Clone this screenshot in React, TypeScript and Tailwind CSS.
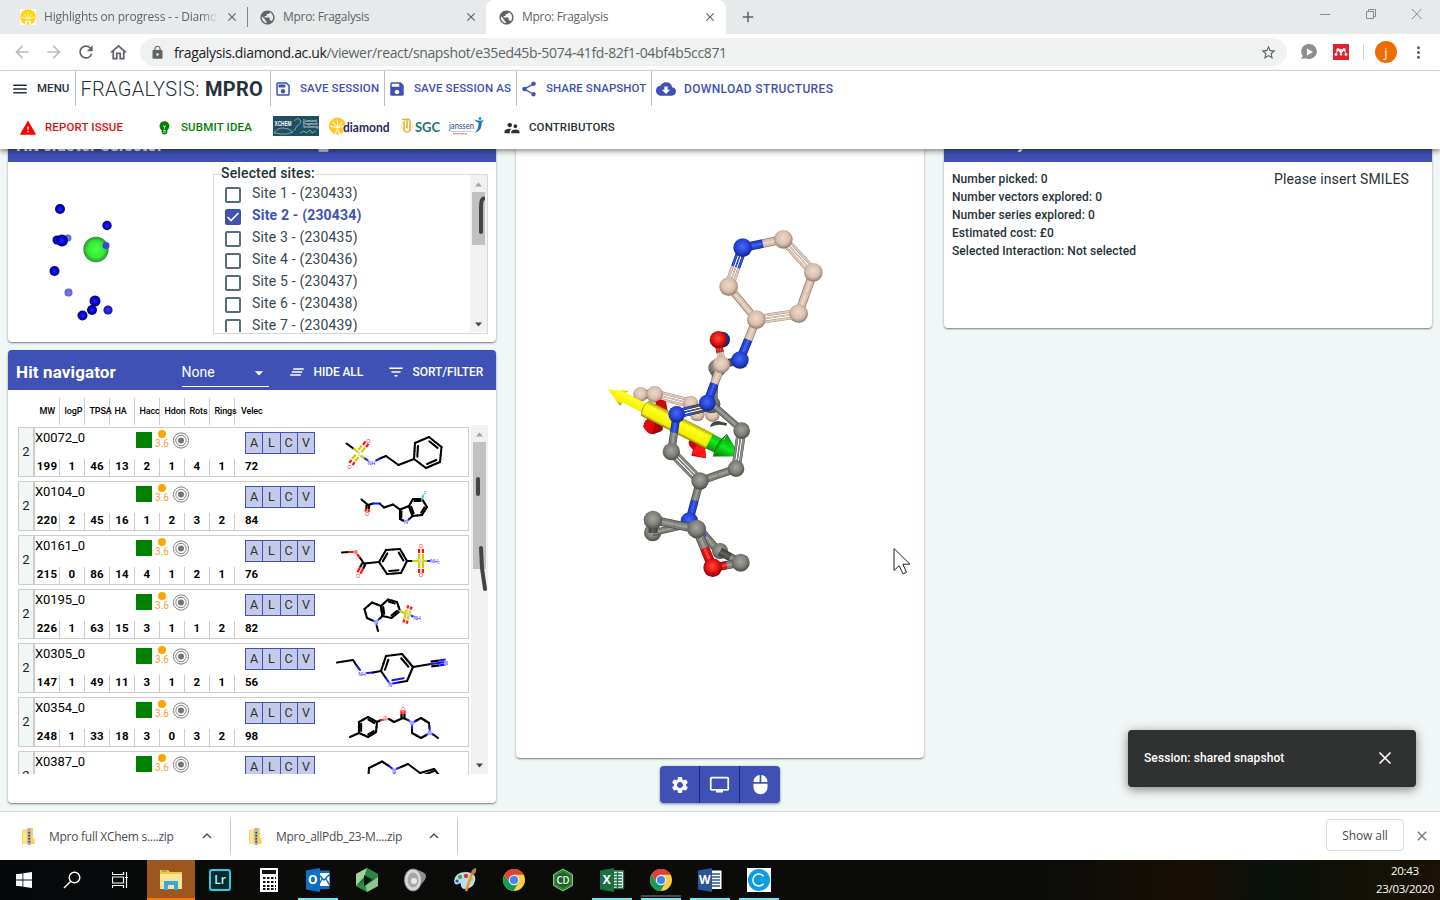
import React from "react";
import {
  MdMenu, MdOutlineSave, MdSave, MdShare, MdCloudDownload, MdWarning, MdEmojiObjects,
  MdSupervisorAccount, MdClearAll, MdFilterList, MdSettings, MdPersonalVideo, MdMouse,
  MdArrowDropDown, MdClose, MdStarBorder, MdRefresh, MdOutlineHome, MdLock, MdPublic,
  MdArrowBack, MdArrowForward, MdAdd, MdMoreVert, MdKeyboardArrowUp, MdLock as MdLockHeader,
} from "react-icons/md";

type P = [number, number];

/* ---------- browser chrome ---------- */

function Sun({ className }: { className?: string }) {
  return (
    <svg viewBox="0 0 18 18" className={className}>
      <circle cx="9" cy="9" r="8.800" fill="#fbd30f" />
      <g stroke="#fffbe0" strokeWidth="1">
        {[-75, -38, 0, 38, 75].map((a) => (
          <line key={a} x1="9" y1="11" x2="9" y2="4" transform={`rotate(${a} 9 11)`} />
        ))}
      </g>
      <path d="M5 17l1.500-4h5l1.500 4z" fill="#fffbe0" />
      <path d="M8 17v-3h2v3z" fill="#fbd30f" />
    </svg>
  );
}

function TabBar() {
  return (
    <div className="flex h-[34px] shrink-0 items-stretch bg-[#e6eaea] font-['Open_Sans','Noto_Sans',sans-serif] text-[12px] text-[#5f6368]">
      <div className="flex w-[247px] items-center pl-[20px]">
        <span className="mr-[8px] flex size-4 bg-white"><Sun className="size-4" /></span>
        <span className="w-[174px] overflow-hidden whitespace-nowrap [mask-image:linear-gradient(to_right,black_90%,transparent)] tracking-[-0.2px]">Highlights on progress - - Diamond</span>
        <MdClose className="ml-[7px] size-[14px]" />
      </div>
      <div className="my-[7px] w-px bg-[#80868b]" />
      <div className="flex w-[238px] items-center pl-[11px]">
        <MdPublic className="size-[17px]" />
        <span className="ml-[7px] w-[181px] tracking-[-0.3px]">Mpro: Fragalysis</span>
        <MdClose className="size-[14px]" />
      </div>
      <div className="flex w-[240px] items-center rounded-t-[8px] bg-white pl-[12px]">
        <MdPublic className="size-[17px]" />
        <span className="ml-[7px] w-[181px] tracking-[-0.3px]">Mpro: Fragalysis</span>
        <MdClose className="size-[14px]" />
      </div>
      <div className="flex items-center pl-[13px]"><MdAdd className="size-[18px]" /></div>
      <div className="flex-1" />
      <svg className="mr-[17px] mt-[7px] h-[14px] w-[104px]" viewBox="0 0 104 14" fill="none" stroke="#858989">
        <path d="M1 7.500h10M47.500 4.500h7v7h-7zM49.500 4.500v-2h7v7h-2M93 2l9.500 10M102.500 2 93 12" />
      </svg>
    </div>
  );
}

function AddressBar() {
  return (
    <div className="flex h-[37px] shrink-0 items-center border-b border-[#dadcdc] bg-white font-['Open_Sans','Noto_Sans',sans-serif] text-[#5f6368]">
      <MdArrowBack className="ml-[12px] size-[20px] text-[#babcbe]" />
      <MdArrowForward className="ml-[12px] size-[20px] text-[#babcbe]" />
      <MdRefresh className="ml-[12px] size-[20px]" />
      <MdOutlineHome className="ml-[12px] size-[21px]" />
      <div className="ml-[11px] flex h-[28px] w-[1147px] items-center rounded-full bg-[#f0f2f1] pl-[10px]">
        <MdLock className="size-[15px]" />
        <span className="ml-[9px] whitespace-nowrap text-[14px] tracking-[-0.35px]"><span className="text-[#202124]">fragalysis.diamond.ac.uk</span>/viewer/react/snapshot/e35ed45b-5074-41fd-82f1-04bf4b5cc871</span>
        <MdStarBorder className="ml-auto mr-[10px] size-[17px]" />
      </div>
      <svg className="ml-[14px] size-[16px]" viewBox="0 0 16 16"><path d="M8.500 0A7.500 7.500 0 1 1 5 14.200L0 15l1.800-3A7.500 7.500 0 0 1 8.500 0z" fill="#8e8e8e" /><path d="M6 4.500v7l6-3.500z" fill="#fff" /></svg>
      <svg className="ml-[16px] size-[16px]" viewBox="0 0 16 16"><path fill="#e5202e" d="M0 0h16v16H0z" /><g fill="#fff"><circle cx="8" cy="7" r="2" /><circle cx="5" cy="5.500" r="1.600" /><circle cx="11" cy="5.500" r="1.600" /><circle cx="3" cy="10.500" r="1.400" /><circle cx="8" cy="10.300" r="1.200" /><circle cx="13" cy="10.500" r="1.400" /><path d="M3 10 4 5h2l2 3 2-3h2l1 5-2-3-1 0-2 3-2-3H5z" /></g></svg>
      <span className="ml-[14px] h-[16px] w-px bg-[#cfd1d2]" />
      <span className="ml-[11px] flex size-[22px] items-center justify-center rounded-full bg-[#ef6c00] text-[13px] leading-none text-white">j</span>
      <MdMoreVert className="ml-[12px] size-[19px]" />
    </div>
  );
}

/* ---------- application header ---------- */

function Logos() {
  return (
    <svg className="h-[30px] w-[215px]" viewBox="272 112 215 30">
      <rect x="273" y="115" width="46" height="20" fill="#1f4f63" />
      <text x="274.500" y="124.500" fontSize="7" fontWeight="700" fill="#fff" textLength="17" lengthAdjust="spacingAndGlyphs" fontFamily="Liberation Sans">XCHEM</text>
      <path d="M274 132q3-5 9-5t10 4q-7 3-12 2t-7-1M294 120q4-4 6-1t-3 6l-3 5M300 132l4-2 2 2 4-3 2 3 4-2" fill="none" stroke="#9fb8c2" strokeWidth=".8" />
      <g fontSize="3.400" fill="#e2ebee" fontFamily="Liberation Sans"><text x="303" y="120.500">Diamond</text><text x="303" y="123.700">Fragment</text><text x="303" y="127">Screening</text></g>
      <circle cx="337.500" cy="125" r="8.600" fill="#fcc92b" />
      <g stroke="#fffbe6" strokeWidth="1.100">
        {[-75, -38, 0, 38, 75].map((a) => (
          <line key={a} x1="337.500" y1="127" x2="337.500" y2="119.500" transform={`rotate(${a} 337.500 127)`} />
        ))}
      </g>
      <path d="M337.500 127l-3.500 6.500h7z" fill="#fff4c8" />
      <path d="M337.500 129l-1.500 4.500h3z" fill="#fcc92b" />
      <text x="343" y="131" fontSize="13" fontWeight="700" fill="#1f2a5c" stroke="#fff" strokeWidth="1" paintOrder="stroke" textLength="46.500" lengthAdjust="spacingAndGlyphs" fontFamily="Lato">diamond</text>
      <path d="M402 118.500h5v9M404 120v8q0 3 3 3t3-3v-7q0-3-3-3" fill="none" stroke="#e2b33c" strokeWidth="1.700" />
      <circle cx="407" cy="125" r="5.800" fill="none" stroke="#f0d590" strokeWidth=".7" />
      <text x="415" y="131" fontSize="13" fontWeight="700" fill="#1d7373" textLength="25" fontFamily="Lato">SGC</text>
      <text x="449" y="128" fontSize="9" fontWeight="400" fill="#2c4a85" textLength="25" lengthAdjust="spacingAndGlyphs" fontFamily="Lato">janssen</text>
      <path d="M451 130.500h20" stroke="#9ba4b5" strokeWidth=".6" />
      <path d="M453 132.800h14" stroke="#e26468" strokeWidth=".9" />
      <path d="M474 118.500q5 2 10 .5l-2.500 3q1 7-6.500 10 4-5 3.500-10.500-2-.5-4.500-3z" fill="#1776b5" />
      <circle cx="480" cy="117.500" r="1.300" fill="#1776b5" />
    </svg>
  );
}

function AppHeader() {
  return (
    <header className="relative z-10 flex h-[78px] shrink-0 flex-col bg-white font-[Roboto,sans-serif] text-[11.5px] font-medium text-[#263238] shadow-[0_2px_4px_rgba(0,0,0,.3),0_4px_6px_rgba(0,0,0,.14)]">
      <div className="flex h-[35px] items-center [&>div]:flex [&>div]:h-full [&>div]:items-center [&>div]:whitespace-nowrap [&>div]:border-r [&>div]:border-[#bdbdbd]">
        <div className="w-[76px] pl-[11px]"><MdMenu className="mr-[8px] size-[18px]" /><span className="tracking-[0.05px]">MENU</span></div>
        <div className="w-[195px] pl-[4.5px] text-[20px] font-light tracking-[0.31px]">FRAGALYSIS:&nbsp;<b className="font-bold">MPRO</b></div>
        <div className="w-[114px] pl-[3px] text-[#3f51b5]"><MdOutlineSave className="mr-[8px] size-[18px]" /><span className="tracking-[0.13px]">SAVE SESSION</span></div>
        <div className="w-[132px] pl-[3px] text-[#3f51b5]"><MdSave className="mr-[8px] size-[18px]" /><span className="tracking-[0.13px]">SAVE SESSION AS</span></div>
        <div className="w-[135px] pl-[3px] text-[#3f51b5]"><MdShare className="mr-[8px] size-[18px]" /><span className="tracking-[0.07px]">SHARE SNAPSHOT</span></div>
        <div className="!border-0 pl-[4px] text-[12px] text-[#3f51b5]"><MdCloudDownload className="mr-[8px] size-[20px]" /><span className="tracking-[0.35px]">DOWNLOAD STRUCTURES</span></div>
      </div>
      <div className="flex h-[43px] items-center whitespace-nowrap">
        <div className="flex w-[156px] items-center pl-[19px] text-[#f00]"><MdWarning className="mr-[8px] size-[18px]" /><span className="tracking-[0.12px] text-[#e01010]">REPORT ISSUE</span></div>
        <div className="flex w-[116px] items-center text-[#008000]"><MdEmojiObjects className="mr-[8px] size-[17px]" /><span className="tracking-[0.15px]">SUBMIT IDEA</span></div>
        <Logos />
        <div className="ml-[16px] flex items-center"><MdSupervisorAccount className="mr-[8px] size-[18px]" /><span className="tracking-[0.1px]">CONTRIBUTORS</span></div>
      </div>
    </header>
  );
}

/* ---------- site selector ---------- */

const clusterBalls: [number, number, number, number][] = [
  [60, 209, 5, 1], [107, 225.500, 4.700, 1], [68, 238, 3.500, 0.6], [57, 240, 4.500, 1], [62, 240.500, 6, 1],
  [54.500, 271, 5, 1], [68.500, 292.500, 4, 0.6], [92, 310, 5, 1], [95, 301, 5.500, 1], [82.500, 315.500, 5, 1], [108, 310, 4.600, 0.9],
];

function ClusterPlot() {
  return (
    <svg className="h-[171px] w-[200px] shrink-0" viewBox="8 162 200 171">
      <defs>
        <radialGradient id="blueBall"><stop offset="0" stopColor="#2a2aff" /><stop offset=".5" stopColor="#0808dd" /><stop offset="1" stopColor="#02027d" /></radialGradient>
        <radialGradient id="greenBall"><stop offset="0" stopColor="#48ff48" /><stop offset=".65" stopColor="#35ea35" /><stop offset="1" stopColor="#329038" /></radialGradient>
      </defs>
      {clusterBalls.map(([x, y, r, o], i) => <circle key={i} cx={x} cy={y} r={r} opacity={o} fill="url(#blueBall)" />)}
      <circle cx="96" cy="249.500" r="12.700" fill="url(#greenBall)" />
      <circle cx="106" cy="245.500" r="3.500" fill="#4040dc" />
    </svg>
  );
}

function ScrollArrow({ up = false, dark = false }) {
  return <svg className="size-[7px]" viewBox="0 0 7 7"><path d={up ? "M0 5.500 3.500 1.500 7 5.500z" : "M0 1.500 3.500 5.500 7 1.500z"} fill={dark ? "#444" : "#a3a3a3"} /></svg>;
}

function ClusterSelector() {
  const sites = [1, 2, 3, 4, 5, 6, 7];
  return (
    <section className="-mt-[27px] flex h-[220px] shrink-0 flex-col overflow-hidden rounded-[4px] bg-white shadow-[0_1px_2px_rgba(0,0,0,.5)]">
      <div className="flex h-[40px] shrink-0 items-center bg-[#3f51b5] pl-[8px] pt-[7px] text-[17px] font-bold text-white">
        <span className="w-[300px] tracking-[0.1px]">Hit cluster selector</span><MdLockHeader className="size-[15px] text-[#d8dcf0]" />
      </div>
      <div className="flex flex-1">
        <ClusterPlot />
        <fieldset className="ml-[5px] mt-[4px] h-[168px] w-[275px] border border-[#d8d8d8]">
          <legend className="ml-[7px] h-[17px] whitespace-nowrap text-[14px] font-medium leading-[15px] tracking-[0.15px] text-[#263238]">Selected sites:</legend>
          <div className="-mt-[8px] flex h-[157px] overflow-hidden">
            <div className="flex-1 pl-[11px] pt-[8px]">
              {sites.map((n) => (
                <div key={n} className={"flex h-[22px] items-center text-[14px] tracking-[0.17px] " + (n === 2 ? "font-bold text-[#3f51b5]" : "text-[#37474f]")}>
                  <span className={"mr-[11px] mt-[2px] flex size-[16px] items-center justify-center rounded-[2px] border-2 " + (n === 2 ? "border-[#3f51b5] bg-[#3f51b5]" : "border-[#546e7a] bg-white")}>
                    {n === 2 && <svg className="size-[14px] shrink-0" viewBox="0 0 14 14"><path d="M1.500 7 5 10.500 12.500 3" fill="none" stroke="#fff" strokeWidth="1.700" /></svg>}
                  </span>
                  <span className="-mt-px">Site {n} - ({230432 + n})</span>
                </div>
              ))}
            </div>
            <div className="relative flex w-[17px] flex-col items-center bg-[#f1f1f1] pb-[4px] pt-[6px]">
              <ScrollArrow up />
              <div className="mt-[4px] h-[53px] w-[13px] bg-[#c1c1c1]" />
              <div className="flex-1" />
              <ScrollArrow dark />
              <svg className="absolute left-[6px] top-[20px] h-[42px] w-[9px]" viewBox="0 0 9 42"><path d="M7.500 3.500Q5 3.500 5 12V37" fill="none" stroke="#444" strokeWidth="4" strokeLinecap="round" /></svg>
            </div>
          </div>
        </fieldset>
      </div>
    </section>
  );
}

/* ---------- 2D structures ---------- */

type Seg = [number, number, number, number, string?, number?];
const K = "#000", B = "#1414ff", R = "#ff1414", Y = "#cccc00";

function ring(pts: P[], doubles: number[], colors: Record<number, string> = {}): Seg[] {
  const cx = pts.reduce((a, p) => a + p[0], 0) / pts.length;
  const cy = pts.reduce((a, p) => a + p[1], 0) / pts.length;
  const out: Seg[] = [];
  pts.forEach((p, i) => {
    const j = (i + 1) % pts.length, q = pts[j];
    const m: P = [(p[0] + q[0]) / 2, (p[1] + q[1]) / 2];
    out.push([p[0], p[1], m[0], m[1], colors[i] || K], [m[0], m[1], q[0], q[1], colors[j] || K]);
    if (doubles.includes(i)) {
      const f = (t: P, o: P): P => [t[0] + (cx - t[0]) * 0.24 + (o[0] - t[0]) * 0.05, t[1] + (cy - t[1]) * 0.24 + (o[1] - t[1]) * 0.05];
      const a = f(p, q), b = f(q, p);
      out.push([a[0], a[1], b[0], b[1], colors[i] || colors[j] || K]);
    }
  });
  return out;
}

interface Mol { segs: Seg[]; labels: [number, number, string, string][]; }

const mols: Mol[] = [
  { segs: [[346.500, 443.500, 354, 449], [354, 449, 359, 453, Y], [360, 451, 363.500, 446.500, Y, 4.500], [364.500, 446, 367, 442.500, R, 4.500], [357, 456, 353.500, 460, Y, 4.500], [353, 461, 351, 464, R, 4.500], [361, 456, 365, 458.500, Y], [365, 458.500, 368.500, 461, B], [376, 460.500, 381, 458, B], [381, 458, 386, 456], [386, 456, 398.500, 465], [398.500, 465, 414, 459],
    ...ring([[414, 459], [415, 443], [429, 437], [441.500, 447], [440, 462], [426, 468]], [0, 2, 4])],
    labels: [[359, 454, "S", "#c9c94a"], [368.500, 441, "O", R], [349.500, 467, "O", R], [371.500, 463.500, "NH", B]] },
  { segs: [[361.500, 499.500, 368, 505], [368, 505, 367.500, 509, K, 3], [367.500, 509, 367, 512, R, 3.500], [368, 505, 373, 503.500], [373, 503.500, 380, 503.500, B], [380, 504, 384, 507.500], [384, 507.500, 393, 504.500], [393, 504.500, 400, 509.500],
    ...ring([[400, 509.500], [409, 506], [412.500, 516], [406, 522], [400, 519]], [4], { 3: B }), ...ring([[409, 506], [413, 499], [422, 499], [427, 507], [422, 515], [412.500, 516]], [1, 3, 5]), [422, 499, 423.500, 495, "#3cc"]],
    labels: [[425, 493, "F", "#3cc"], [367, 514.500, "O", R], [406, 522.500, "N", B]] },
  { segs: [[342, 552.500, 349, 552], [349, 552, 356, 552, R], [357, 554, 360.500, 558.500, R], [360.500, 558.500, 364, 563.500], [364, 563.500, 361.500, 568, K, 4], [361.500, 568, 359, 573, R, 4], [364, 563.500, 379, 562],
    ...ring([[379, 562], [386, 550], [400, 549], [407, 561], [401, 573], [387, 574]], [0, 2, 4]), [407, 561, 413, 561], [413, 561, 427, 561, Y], [421, 554, 421, 568, Y, 4.500], [421, 549, 421, 553, R, 4.500], [421, 569, 421, 573, R, 4.500], [428, 561, 432, 561, B]],
    labels: [[356, 552.500, "O", R], [358, 576, "O", R], [421, 546.500, "O", R], [421, 575.500, "O", R], [421, 561, "S", "#b9b93a"], [435, 561.500, "NH₂", B]] },
  { segs: [...ring([[376, 622], [367, 618], [364.500, 609], [372, 602.500], [381, 606], [382.500, 616]], [], { 0: B }), ...ring([[381, 606], [388, 599.500], [397, 602], [400, 611], [391.500, 618], [382.500, 616]], [1, 3, 5]), [376, 622, 377, 627, B], [377, 627, 378, 631], [400, 611, 404, 613, Y], [404, 613, 411, 615, Y], [408.500, 610, 406, 619, Y, 4], [410, 606, 409, 609, R, 4], [406, 620, 405, 623, R, 4], [412, 616, 416, 617.500, B]],
    labels: [[376, 622, "N", B], [408, 614, "S", "#bbbb35"], [417, 618, "NH", B]] },
  { segs: [[337, 662.500, 353, 660], [353, 660, 357, 666], [357, 666, 360, 670, B], [367, 673, 373, 672.500, B], [373, 672.500, 381, 671],
    ...ring([[381, 671], [386, 656], [402, 654], [413, 667], [407, 681], [390, 684]], [0, 2, 4], { 5: B }), [413, 667, 431, 664], [431, 664, 439, 663, K, 5.500], [439, 663, 446, 662, B, 5.500], [431, 664, 446, 662, B]],
    labels: [[362, 674.500, "NH", B], [390, 685, "N", B], [446, 663.500, "N", B]] },
  { segs: [[350, 737, 359, 733], ...ring([[359, 733], [359, 722], [368, 717], [377, 722], [376, 732], [368, 737]], [0, 2, 4]), [377, 722, 381, 720], [381, 720, 389, 719, R], [389, 719, 394, 722], [394, 722, 403, 718], [403, 718, 403, 714, K, 3.500], [403, 714, 403, 710, R, 3.500], [403, 718, 408, 720], [408, 720, 411, 722, B],
    ...ring([[412, 723], [421, 718], [429, 723], [430, 733], [421, 738], [412, 733]], [], { 0: B, 3: B }), [430, 733, 434, 735, B], [434, 735, 438, 738]],
    labels: [[385.500, 718.500, "O", R], [403, 709.500, "O", R], [411.500, 723.500, "N", B], [429.500, 733.500, "N", B]] },
  { segs: [[368.500, 775, 369, 768], [369, 768, 382, 761.500], [382, 761.500, 389, 766], [389, 766, 394, 770, B], [396, 769, 401, 767, B], [401, 767, 408, 764], [408, 764, 420, 773], [420, 773, 434, 769], [434, 769, 439, 775], [424, 775, 434, 771], [394, 771, 394, 777, B]],
    labels: [[394, 771, "N", B]] },
];

function Structure({ mol, top }: { mol: Mol; top: number }) {
  return (
    <svg className="ml-[15px] h-[48px] w-[125px] shrink-0" viewBox={`330 ${top} 125 48`}>
      {mol.segs.map(([a, b, c, d, col, w], i) => {
        if (!w) return <line key={i} x1={a} y1={b} x2={c} y2={d} stroke={col || K} strokeWidth="2.100" strokeLinecap="round" />;
        const l = Math.hypot(c - a, d - b), nx = (-(d - b) / l) * w * 0.42, ny = ((c - a) / l) * w * 0.42;
        return (
          <g key={i} stroke={col || K} strokeWidth="2.300">
            <line x1={a + nx} y1={b + ny} x2={c + nx} y2={d + ny} />
            <line x1={a - nx} y1={b - ny} x2={c - nx} y2={d - ny} />
          </g>
        );
      })}
      {mol.labels.map(([x, y, t, c], i) => (
        <text key={i} x={x} y={y + 1.800} fontSize="5.200" fill={c} stroke="#fff" strokeWidth=".8" paintOrder="stroke" textAnchor="middle" fontFamily="Liberation Sans">{t}</text>
      ))}
    </svg>
  );
}

/* ---------- hit navigator ---------- */

const columns = ["MW", "logP", "TPSA", "HA", "Hacc", "Hdon", "Rots", "Rings"];
const hits: [string, number[], string][] = [
  ["X0072_0", [199, 1, 46, 13, 2, 1, 4, 1], "72"],
  ["X0104_0", [220, 2, 45, 16, 1, 2, 3, 2], "84"],
  ["X0161_0", [215, 0, 86, 14, 4, 1, 2, 1], "76"],
  ["X0195_0", [226, 1, 63, 15, 3, 1, 1, 2], "82"],
  ["X0305_0", [147, 1, 49, 11, 3, 1, 2, 1], "56"],
  ["X0354_0", [248, 1, 33, 18, 3, 0, 3, 2], "98"],
  ["X0387_0", [], ""],
];

function HitRow({ index }: { index: number }) {
  const [name, values, velec] = hits[index];
  return (
    <div className="flex h-[50px] w-[451px] shrink-0 overflow-hidden border border-[#ccc] bg-white">
      <div className="flex w-[16px] shrink-0 items-center justify-center border-r-2 border-[#ccc] bg-[#f1f6f7] text-[13px] text-[#222]">2</div>
      <div className="flex w-[200px] shrink-0 flex-col justify-between">
        <div className="flex h-[22px]">
          <span className="w-[101px] text-[13px] leading-[20px] tracking-[-0.1px] text-black">{name}</span>
          <span className="mt-[4px] size-[16px] bg-[#008000]" />
          <span className="ml-[3px] flex w-[14px] flex-col items-center pt-[2px] text-[10px] leading-[10px] text-[#f0a030]"><i className="mb-[1px] size-[8px] shrink-0 rounded-full bg-[#ffa500]" />3.6</span>
          <svg className="ml-[3px] mt-[3.5px] size-[17px]" viewBox="0 0 17 17" fill="none" stroke="#808080"><circle cx="9" cy="8.500" r="7.600" /><circle cx="9" cy="8.500" r="5.200" /><circle cx="9" cy="8.500" r="3" fill="#757575" stroke="none" /></svg>
        </div>
        <div className="flex h-[17px]">
          {values.map((v, i) => (
            <span key={i} className="flex w-[25px] shrink-0 justify-center border-r border-[#ccc] text-[11.5px] font-bold leading-[14px] tracking-[0.2px] text-black">{v}</span>
          ))}
        </div>
      </div>
      <div className="ml-[10px] flex w-[70px] shrink-0 flex-col justify-between pt-[4px]">
        <div className="flex h-[22px] border border-[#3f51b5] bg-[#c5cae9] text-[12.5px] text-[#263238]">
          {["A", "L", "C", "V"].map((l, i) => <span key={l} className={"flex flex-1 items-center justify-center " + (i < 3 ? "border-r border-[#3f51b5]" : "")}>{l}</span>)}
        </div>
        <span className="h-[17px] text-[11.5px] font-bold leading-[14px] text-black">{velec}</span>
      </div>
      <Structure mol={mols[index]} top={428 + index * 54} />
    </div>
  );
}

function HitNavigator() {
  return (
    <section className="mt-[8px] flex h-[453px] shrink-0 flex-col overflow-hidden rounded-[4px] bg-white shadow-[0_1px_2px_rgba(0,0,0,.5)]">
      <div className="flex h-[40px] shrink-0 items-center bg-[#3f51b5] pl-[8px] text-[12px] font-medium text-white">
        <span className="mt-[5px] w-[165.5px] text-[17px] font-bold tracking-[0.13px]">Hit navigator</span>
        <span className="mt-[4px] flex h-[29px] w-[87px] items-center justify-between border-b border-white pt-[2px] text-[14px] font-normal">None<MdArrowDropDown className="size-[20px]" /></span>
        <MdClearAll className="ml-[19px] mr-[8px] mt-[3px] size-[18px]" /><span className="mt-[3px] w-[50px] whitespace-nowrap tracking-[-0.1px]">HIDE ALL</span>
        <MdFilterList className="ml-[23px] mr-[8px] mt-[3px] size-[18px]" /><span className="mt-[3px] whitespace-nowrap tracking-[-0.05px]">SORT/FILTER</span>
      </div>
      <div className="ml-[27px] mt-[8px] flex h-[27px] shrink-0 text-[9px] font-medium tracking-[-0.12px] text-black">
        {columns.map((c) => <span key={c} className="flex w-[25px] items-center border-r border-[#ccc] pl-[4.5px] pt-[1px]">{c}</span>)}
        <span className="flex items-center pl-[6px] pt-[1px]">Velec</span>
      </div>
      <div className="ml-[10px] flex h-[349px] shrink-0 overflow-hidden">
        <div className="flex w-[453px] flex-col gap-[4px] pt-[2px]">
          {hits.map((h, i) => <HitRow key={h[0]} index={i} />)}
        </div>
        <div className="relative flex h-[349px] w-[17px] flex-col items-center bg-[#f1f1f1] pb-[5px] pt-[6px]">
          <ScrollArrow up />
          <div className="mt-[4px] h-[127px] w-[13px] bg-[#c1c1c1]" />
          <div className="flex-1" />
          <ScrollArrow dark />
          <svg className="absolute left-0 top-[50px] h-[120px] w-[17px]" viewBox="471 475 17 120" fill="none" stroke="#444" strokeWidth="4" strokeLinecap="round"><path d="M478 479v15M481 548l1 20 3 21" /></svg>
        </div>
      </div>
    </section>
  );
}

/* ---------- 3D viewer ---------- */

const tones: Record<string, [string, string, string]> = {
  tan: ["#8f7a6e", "#d9bfae", "#efd9ca"],
  gray: ["#4a4a46", "#7e7e79", "#a5a5a0"],
  blue: ["#13247f", "#2443d8", "#4a67ee"],
  red: ["#7d0000", "#e01010", "#ff4a3d"],
  darkgray: ["#2d2d2b", "#4d4d4a", "#656561"],
  darkblue: ["#0d1b66", "#1a329c", "#2b48c0"],
};

function Rod({ a, b, t, w = 26 }: { a: P; b: P; t: string; w?: number }) {
  const c = tones[t];
  return (
    <g fill="none">
      <path d={`M${a}L${b}`} stroke={c[0]} strokeWidth={w} />
      <path d={`M${a}L${b}`} stroke={c[1]} strokeWidth={w * 0.82} />
      <path d={`M${a}L${b}`} stroke={c[2]} strokeWidth={w * 0.28} opacity=".8" />
    </g>
  );
}
function Bond({ a, b, t, u = t, w }: { a: P; b: P; t: string; u?: string; w?: number }) {
  const m: P = [(a[0] + b[0]) / 2, (a[1] + b[1]) / 2];
  return <g><Rod a={a} b={m} t={t} w={w} /><Rod a={m} b={b} t={u} w={w} /></g>;
}
function Double({ a, b, t, u = t, g = 10 }: { a: P; b: P; t: string; u?: string; g?: number }) {
  const l = Math.hypot(b[0] - a[0], b[1] - a[1]);
  const n: P = [-(b[1] - a[1]) / l, (b[0] - a[0]) / l];
  return (
    <g>
      <path d={`M${a}L${b}`} stroke="#fff" strokeWidth={g * 2} />
      {[-1, 0, 1].map((k) => <Bond key={k} a={[a[0] + n[0] * g * k, a[1] + n[1] * g * k]} b={[b[0] + n[0] * g * k, b[1] + n[1] * g * k]} t={t} u={u} w={k ? 8 : 4} />)}
    </g>
  );
}
function Atom({ p, t, r = 27 }: { p: P; t: string; r?: number }) {
  return <circle cx={p[0]} cy={p[1]} r={r} fill={`url(#atom-${t})`} />;
}

function Molecule3D() {
  return (
    <svg className="ml-[74px] mt-[98px] h-[370px] w-[250px]" viewBox="0 0 750 1110">
      <defs>
        {Object.entries(tones).map(([k, c]) => (
          <radialGradient key={k} id={`atom-${k}`} cx=".48" cy=".42" r=".58">
            <stop offset="0" stopColor={c[2]} /><stop offset=".6" stopColor={c[1]} /><stop offset="1" stopColor={c[0]} />
          </radialGradient>
        ))}
        <linearGradient id="arrowYellow" x1="0" y1="0" x2="0" y2="1"><stop offset="0" stopColor="#aaa000" /><stop offset=".25" stopColor="#ffff20" /><stop offset=".8" stopColor="#f6ee00" /><stop offset="1" stopColor="#6a6500" /></linearGradient>
        <linearGradient id="arrowGreen" x1="0" y1="0" x2="0" y2="1"><stop offset="0" stopColor="#078a0d" /><stop offset=".5" stopColor="#10ec1b" /><stop offset="1" stopColor="#036a08" /></linearGradient>
      </defs>
      <Bond a={[152, 523]} b={[194, 523]} t="gray" u="darkgray" />
      <Atom p={[152, 523]} t="tan" r={22} />
      <Double a={[194, 523]} b={[300, 550]} t="tan" />
      <Atom p={[194, 523]} t="tan" r={25} />
      <Rod a={[240, 568]} b={[320, 580]} t="tan" w={8} />
      <Atom p={[322, 582]} t="tan" r={22} /><Atom p={[367, 584]} t="tan" r={22} /><Atom p={[302, 550]} t="tan" r={23} />
      <path d="M198 545q16-12 30 0l6 30-40-10z" fill="#cb0a0a" />
      <path d="M160 620q4-27 27-26l16 8q15 1 16 17t-13 18l-16 6q-17-3-30-23z" fill="#a40000" />
      <path d="M160 620q4-27 27-26 16 24-4 49-14-6-23-23z" fill="#e00a0a" />
      <path d="M296 664q8-12 25-6l24 14 2 43-43-8 5-18q-14-10-13-25z" fill="#cb0505" />
      <path d="M305 701l22-38q22 13 21 52z" fill="#ff1717" />
      <path d="M360 622q2-18 25-19l26 7-2 7q-30-8-49 5z" fill="#3d4545" />
      <g transform="translate(53 508) rotate(27)">
        <path d="M0 0 58-24 54-15H125V-25H345V25H125V15H58L56 27z" fill="url(#arrowYellow)" />
        <path d="M125-24q-10 24 0 48" fill="none" stroke="#827b08" strokeWidth="2" />
        <path d="M342-24h38v-19l66 42-72 37V24h-32z" fill="url(#arrowGreen)" />
        <path d="M380-42q-18 38-6 78" fill="#0cb014" stroke="#08560b" strokeWidth="2" />
      </g>
      <Atom p={[382, 444]} t="gray" /><Rod a={[376, 455]} b={[372, 545]} t="gray" w={20} />
      <Atom p={[364, 553]} t="gray" r={27} />
      <Bond a={[370, 555]} b={[455, 630]} t="gray" w={20} />
      <Double a={[455, 630]} b={[438, 746]} t="gray" />
      <Bond a={[438, 746]} b={[330, 783]} t="gray" w={24} />
      <Double a={[244, 695]} b={[330, 783]} t="gray" />
      <Bond a={[260, 582]} b={[244, 695]} t="blue" u="gray" w={24} />
      <Double a={[260, 582]} b={[352, 560]} t="blue" u="darkgray" />
      <Atom p={[455, 632]} t="gray" r={25} /><Atom p={[438, 746]} t="gray" r={25} /><Atom p={[244, 695]} t="gray" r={26} />
      <Bond a={[330, 783]} b={[298, 902]} t="gray" u="blue" w={24} /><Atom p={[330, 783]} t="gray" r={26} />
      <Atom p={[260, 583]} t="blue" r={25} />
      <Atom p={[396, 359]} t="darkblue" r={24} />
      <Double a={[386, 375]} b={[395, 420]} t="red" u="tan" g={7} />
      <Bond a={[394, 434]} b={[352, 548]} t="tan" u="blue" w={26} />
      <Bond a={[400, 433]} b={[450, 420]} t="darkgray" u="darkblue" w={24} />
      <Atom p={[394, 434]} t="tan" r={26} /><Atom p={[385, 359]} t="red" r={26} /><Atom p={[352, 549]} t="blue" r={25} />
      <Bond a={[499, 299]} b={[450, 420]} t="tan" u="blue" /><Atom p={[450, 420]} t="blue" r={26} />
      <Bond a={[458, 83]} b={[580, 58]} t="blue" u="tan" />
      <Double a={[458, 83]} b={[416, 200]} t="blue" u="tan" />
      <Double a={[580, 58]} b={[670, 157]} t="tan" />
      <Bond a={[670, 157]} b={[626, 281]} t="tan" /><Double a={[626, 281]} b={[499, 299]} t="tan" /><Bond a={[499, 299]} b={[416, 200]} t="tan" w={22} />
      {([[580, 58], [670, 157], [626, 281], [499, 299], [416, 200]] as P[]).map((p) => <Atom key={p.join()} p={p} t="tan" r={28} />)}
      <Atom p={[458, 83]} t="blue" r={28} />
      <Atom p={[188, 938]} t="gray" r={26} /><Rod a={[188, 938]} b={[290, 915]} t="gray" w={20} /><Rod a={[189, 902]} b={[189, 938]} t="darkgray" w={26} />
      <Atom p={[298, 903]} t="blue" r={26} />
      <Rod a={[335, 935]} b={[390, 1000]} t="gray" w={24} />
      <path d="M337 935l13 10-3 7z" fill="#2443d8" />
      <Atom p={[390, 993]} t="gray" r={24} /><Bond a={[390, 995]} b={[452, 1028]} t="darkgray" u="gray" w={25} />
      <Bond a={[368, 1043]} b={[452, 1028]} t="red" u="gray" w={25} /><Atom p={[452, 1028]} t="gray" r={27} />
      <Bond a={[189, 900]} b={[320, 927]} t="gray" /><Atom p={[189, 900]} t="gray" r={28} />
      <Bond a={[320, 927]} b={[368, 1043]} t="gray" u="red" w={28} /><Atom p={[320, 927]} t="gray" r={28} /><Atom p={[368, 1043]} t="red" r={28} />
    </svg>
  );
}

function Viewer() {
  return (
    <div className="relative flex w-[408px] flex-col items-center">
      <section className="-mt-[27px] h-[636px] w-full shrink-0 rounded-[4px] bg-white shadow-[0_1px_2px_rgba(0,0,0,.5)]"><Molecule3D /></section>
      <div className="mt-[8px] flex h-[37px] w-[120px] rounded-[4px] bg-[#3f51b5] text-white shadow-[0_1px_3px_rgba(0,0,0,.45)] [&>span]:flex [&>span]:w-[40px] [&>span]:items-center [&>span]:justify-center">
        <span className="border-r border-[#1a237e]"><MdSettings className="size-[20px]" /></span>
        <span className="border-r border-[#1a237e]"><MdPersonalVideo className="size-[21px]" /></span>
        <span><MdMouse className="size-[21px]" /></span>
      </div>
      <svg className="absolute left-[377px] top-[398px] h-[30px] w-[20px]" viewBox="0 0 20 30"><path d="M1 1.500v22l5.200-4.800 3.800 8.300 3.500-1.600-3.600-8.200h7z" fill="#fff" stroke="#222" /></svg>
    </div>
  );
}

function Summary() {
  return (
    <section className="-mt-[27px] flex h-[206px] w-[488px] flex-col overflow-hidden rounded-[4px] bg-white text-[#263238] shadow-[0_1px_2px_rgba(0,0,0,.5)]">
      <div className="flex h-[40px] shrink-0 items-center bg-[#3f51b5] pl-[8px] pt-[4px] text-[17px] font-bold text-white">Summary</div>
      <div className="flex justify-between pl-[8px] pr-[23px] pt-[8px]">
        <div className="flex flex-col text-[12px] font-medium leading-[18px] tracking-[0.08px]">
          <span>Number picked: 0</span><span>Number vectors explored: 0</span><span>Number series explored: 0</span><span>Estimated cost: £0</span><span>Selected Interaction: Not selected</span>
        </div>
        <span className="text-[14px] leading-[18px] tracking-[0.13px]">Please insert SMILES</span>
      </div>
    </section>
  );
}

/* ---------- download shelf and taskbar ---------- */

function ZipIcon() {
  return (
    <svg className="h-[17px] w-[13px]" viewBox="0 0 13 17"><path d="M0 2 11 0v10h1.500v6H0z" fill="#f3d160" /><path d="M1 2.500h3.500V16H1z" fill="#fae796" /><path d="M5.500 0h3.500v17H5.500z" fill="#b5b3aa" /><path d="M7.200 4v12" stroke="#333" strokeWidth="1.500" strokeDasharray="1.500 1.500" /></svg>
  );
}

function DownloadShelf() {
  return (
    <div className="flex h-[49px] shrink-0 items-center border-t border-[#d5dbdc] bg-white font-['Open_Sans','Noto_Sans',sans-serif] text-[12px] tracking-[-0.27px] text-[#4a4d50]">
      <div className="flex h-[36px] w-[231px] items-center border-r border-[#ccc] pl-[22px]"><ZipIcon /><span className="ml-[14px] mt-[2px] w-[149px] whitespace-nowrap">Mpro full XChem s....zip</span><MdKeyboardArrowUp className="size-[18px]" /></div>
      <div className="flex h-[36px] w-[227px] items-center border-r border-[#ccc] pl-[18px]"><ZipIcon /><span className="ml-[14px] mt-[2px] w-[149px] whitespace-nowrap">Mpro_allPdb_23-M....zip</span><MdKeyboardArrowUp className="size-[18px]" /></div>
      <span className="ml-auto mt-[-2px] flex h-[32px] w-[78px] items-center justify-center rounded-[4px] border border-[#dadcdc] pt-px tracking-[-0.1px]">Show all</span>
      <MdClose className="ml-[10px] mr-[10px] size-[16px] text-[#757575]" />
    </div>
  );
}

function Chrome() {
  return (
    <svg className="size-[24px]" viewBox="0 0 24 24"><circle cx="12" cy="12" r="11" fill="#ffcd40" /><path d="M12 12 2.500 6.500A11 11 0 0 1 21.500 6.500H12z" fill="#db4437" /><path d="M2.500 6.500A11 11 0 0 0 11.500 23L16.500 14.500 12 12 7.200 14.700z" fill="#0f9d58" /><path d="M2.500 6.500A11 11 0 0 1 21.500 6.500H12L8 9 7 14z" fill="#db4437" /><circle cx="12" cy="12" r="5.200" fill="#f1f1f1" /><circle cx="12" cy="12" r="4.100" fill="#4285f4" /></svg>
  );
}

function OfficeIcon({ letter, color }: { letter: string; color: string }) {
  return (
    <svg className="size-[26px]" viewBox="0 0 26 26">
      <rect x="12" y="3.500" width="12.500" height="18.500" fill={letter === "O" ? color : "#fff"} />
      {letter === "O" && <path d="M12 6h12.500v13H12z" fill="#fff" />}
      {letter === "O" && <path d="M13 7l6 6 6-6M13 19l4-7M25 19l-4-7" stroke={color} strokeWidth="1.500" fill="none" />}
      {letter === "W" && <path d="M13 7h10M13 10h10M13 13h10M13 16h10M13 19h10" stroke={color} strokeWidth="1.300" />}
      {letter === "X" && <path d="M12 4h12.500v17.500H12M14 7h9M14 10h9M14 13h9M14 16h9M14 19h9M18.500 5v16" stroke={color} strokeWidth="1.400" fill="none" />}
      <path d="M1 3.500 15 1v24L1 22.500z" fill={color} />
      <text x="7.800" y="17.300" fontSize="12" fontWeight="700" fill="#fff" textAnchor="middle" fontFamily="Open Sans">{letter}</text>
    </svg>
  );
}

const apps: [React.ReactNode, string][] = [
  [<svg className="size-[26px]" viewBox="0 0 26 26"><path d="M2 3h8l2 2h12v17H2z" fill="#f4c542" /><path d="M2 7h22v15H2z" fill="#fbe39a" /><path d="M6 23V14h14v9h-4v-5h-6v5z" fill="#36a9dc" /><path d="M4 4h5" stroke="#3b8ec0" /></svg>, "explorer"],
  [<span className="flex size-[22px] items-center justify-center rounded-[3px] border-2 border-[#26d0dc] bg-[#062a30] font-['Open_Sans',sans-serif] text-[12px] font-semibold text-[#c5f1f3]">Lr</span>, ""],
  [<svg className="h-[24px] w-[18px]" viewBox="0 0 18 24"><path fill="#fff" d="M0 0h18v24H0z" /><path fill="#111" d="M2 2h14v4H2z" /><path d="M3 10h13M3 14h13M3 18h13M3 21h13" stroke="#111" strokeWidth="2" strokeDasharray="2.500 1.500" /></svg>, ""],
  [<OfficeIcon letter="O" color="#0f6fc6" />, "run"],
  [<svg className="size-[26px]" viewBox="0 0 26 26"><path d="M13 1 2 7v12l11 6 11-6V7z" fill="#1c6b36" /><path d="M13 1l11 6v6L9 8z" fill="#2c8747" /><path d="M24 10v9l-11 6-2-6z" fill="#8cc68c" /><path d="M2 7l11-6-3 9-8 9z" fill="#a5d296" /><path d="M2 19l8-5 3 11z" fill="#2f8a4b" /><path d="M10 8l8 5-8 6z" fill="#0b1610" /></svg>, ""],
  [<svg className="size-[26px]" viewBox="0 0 26 26"><path d="M11 2q12 3 12 7t-5 8l-7 7z" fill="#8d9094" /><ellipse cx="10" cy="13" rx="8.500" ry="11" fill="#d7d9dc" stroke="#8c8f93" /><ellipse cx="10" cy="13" rx="5.500" ry="7.500" fill="#a4a7ab" /><circle cx="11" cy="14" r="3" fill="#e7e8ea" /></svg>, ""],
  [<svg className="size-[26px]" viewBox="0 0 26 26"><path d="M2 14Q3 5 14 5q11 1 9 9t-11 8q-3-1-3-4t-3-1-4-3z" fill="#bcdcef" /><circle cx="8" cy="10" r="2.200" fill="#52a53d" /><circle cx="14" cy="9" r="2.200" fill="#d83a2d" /><circle cx="19" cy="12" r="2" fill="#f0b429" /><circle cx="5" cy="14" r="1.600" fill="#304ea1" /><path d="M14 24 20 6" stroke="#e59a2b" strokeWidth="2.500" /><path d="M19 7q0-5 5-6 1 5-3 7z" fill="#b98242" /></svg>, ""],
  [<Chrome />, ""],
  [<svg className="size-[24px]" viewBox="0 0 24 24"><path d="M12 1l9.500 5.500v11L12 23l-9.500-5.500v-11z" fill="#2f8a2d" stroke="#8fc789" /><path d="M12 4l7 4v8l-7 4-7-4V8z" fill="#1a5f23" /><text x="12" y="15.800" fontSize="10" fontWeight="600" textAnchor="middle" fill="#fff" textLength="13" lengthAdjust="spacingAndGlyphs" fontFamily="Open Sans">CD</text></svg>, ""],
  [<OfficeIcon letter="X" color="#1d7044" />, "run"],
  [<Chrome />, "active"],
  [<OfficeIcon letter="W" color="#2a5699" />, "run"],
  [<span className="flex size-[24px] items-center justify-center bg-white"><svg className="size-[22px]" viewBox="0 0 22 22"><circle cx="11" cy="11" r="11" fill="#0d9de0" /><path d="M15.500 7.200A6 6 0 1 0 15.500 14.800" fill="none" stroke="#fff" strokeWidth="1.400" /></svg></span>, "run"],
];

function Taskbar() {
  return (
    <div className="flex h-[40px] shrink-0 items-stretch bg-[linear-gradient(90deg,#05090b_0%,#0b0c09_20%,#0b0c09_72%,#190f06_83%,#0a110b_88%,#1b1204_100%)]">
      <div className="flex w-[48px] items-center justify-center"><svg className="size-[16px]" viewBox="0 0 16 16" fill="#fff"><path d="M0 2.300 6.500 1.400v6.200H0zM7.300 1.300 16 0v7.600H7.300zM0 8.400h6.500v6.200L0 13.700zM7.300 8.400H16V16l-8.700-1.300z" /></svg></div>
      <div className="flex w-[48px] items-center justify-center"><svg className="size-[18px]" viewBox="0 0 18 18" fill="none" stroke="#fff" strokeWidth="1.400"><circle cx="11.500" cy="6.500" r="5.300" /><path d="M7.500 10.500 1 17" /></svg></div>
      <div className="flex w-[51px] items-center pl-[16px]"><svg className="h-[16px] w-[17px]" viewBox="0 0 17 16" fill="none" stroke="#fff" strokeWidth="1.200"><path d="M.5 0v2.500h11V0M.5 5h11v6H.5zM.5 16v-2.500h11V16M14.500 0v16M13 5.500h3" /></svg></div>
      {apps.map(([icon, state], i) => (
        <div key={i} className={"mr-px flex w-[48px] flex-col items-center " + (state === "explorer" ? "bg-[#9c5720]" : "")}>
          <span className="flex h-[38px] flex-1 items-center pt-[2px]">{icon}</span>
          <span className={"h-[2px] shrink-0 " + (state === "explorer" ? "w-[48px] bg-[#ff7800]" : state === "run" ? "w-[40px] bg-[#76e8ef]" : state === "active" ? "w-[40px] bg-[#76e8ef] shadow-[0_-3px_0_#474a49]" : "w-0")} />
        </div>
      ))}
      <div className="ml-auto mr-[6px] flex flex-col items-center pt-[2px] font-['Open_Sans','Noto_Sans',sans-serif] text-[11.5px] leading-[18px] tracking-[-0.3px] text-white"><span>20:43</span><span>23/03/2020</span></div>
    </div>
  );
}

export default function App() {
  return (
    <div className="flex h-[900px] w-[1440px] flex-col overflow-hidden bg-[#f1f6f7]">
      <TabBar />
      <AddressBar />
      <AppHeader />
      <main className="relative flex h-[662px] shrink-0 gap-[20px] overflow-hidden bg-[#f1f6f7] px-[8px] font-[Roboto,sans-serif]">
        <div className="flex w-[488px] flex-col"><ClusterSelector /><HitNavigator /></div>
        <Viewer />
        <Summary />
        <div className="absolute right-[24px] top-[581px] flex h-[57px] w-[288px] items-center justify-between rounded-[4px] bg-[#303131] pb-px pl-[16px] pr-[20px] text-[12px] font-medium text-white shadow-[0_3px_8px_rgba(0,0,0,.35),0_1px_14px_rgba(0,0,0,.15)]">
          <span className="tracking-[0.1px]">Session: shared snapshot</span>
          <svg className="size-[22px]" viewBox="0 0 22 22"><path d="M5.500 5.500l11 11M16.500 5.500l-11 11" stroke="#fff" strokeWidth="1.600" /></svg>
        </div>
      </main>
      <DownloadShelf />
      <Taskbar />
    </div>
  );
}
